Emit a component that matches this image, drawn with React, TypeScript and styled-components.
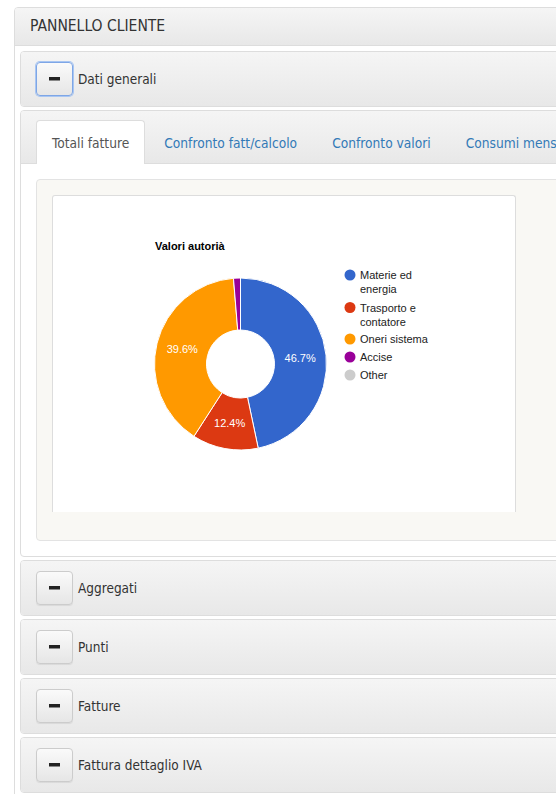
import React from 'react';
import styled, { createGlobalStyle, css } from 'styled-components';

const GlobalStyle = createGlobalStyle`
  html, body {
    margin: 0;
    padding: 0;
    overflow: hidden;
    background: #ffffff;
  }
  body {
    font-family: 'DejaVu Sans Condensed', 'DejaVu Sans', sans-serif;
    color: #333333;
  }
`;

const slices = [
  { label: 'Materie ed energia', value: 46.7, color: '#3366cc' },
  { label: 'Trasporto e contatore', value: 12.4, color: '#dc3912' },
  { label: 'Oneri sistema', value: 39.6, color: '#ff9900' },
  { label: 'Accise', value: 1.3, color: '#990099' },
];

const legend = [
  { lines: ['Materie ed', 'energia'], color: '#3366cc', cy: 79 },
  { lines: ['Trasporto e', 'contatore'], color: '#dc3912', cy: 111.5 },
  { lines: ['Oneri sistema'], color: '#ff9900', cy: 143 },
  { lines: ['Accise'], color: '#990099', cy: 161 },
  { lines: ['Other'], color: '#cccccc', cy: 179 },
];

const tabs = [
  'Totali fatture',
  'Confronto fatt/calcolo',
  'Confronto valori',
  'Consumi mensili',
];

const sections = ['Aggregati', 'Punti', 'Fatture', 'Fattura dettaglio IVA'];

const CX = 187.5;
const CY = 168;
const R = 86;
const HOLE = 34;

const point = (angle: number, r: number) => {
  const rad = ((angle - 90) * Math.PI) / 180;
  return [CX + r * Math.cos(rad), CY + r * Math.sin(rad)];
};

const slicePath = (start: number, end: number) => {
  const [x1, y1] = point(start, R);
  const [x2, y2] = point(end, R);
  const [x3, y3] = point(end, HOLE);
  const [x4, y4] = point(start, HOLE);
  const large = end - start > 180 ? 1 : 0;
  return `M${x1} ${y1} A${R} ${R} 0 ${large} 1 ${x2} ${y2} L${x3} ${y3} A${HOLE} ${HOLE} 0 ${large} 0 ${x4} ${y4} Z`;
};

function DonutChart() {
  let acc = 0;
  return (
    <svg width="462" height="316" viewBox="0 0 462 316">
      <text
        x="102"
        y="54"
        fontFamily="'Liberation Sans', Arial, sans-serif"
        fontSize="11"
        fontWeight="bold"
        fill="#000000"
      >
        Valori autorià
      </text>
      {slices.map((s) => {
        const start = (acc / 100) * 360;
        acc += s.value;
        const end = (acc / 100) * 360;
        const mid = (start + end) / 2;
        const [lx, ly] = point(mid, 60);
        return (
          <g key={s.label}>
            <path d={slicePath(start, end)} fill={s.color} stroke="#ffffff" strokeWidth="1" />
            {s.value > 5 && (
              <text
                x={lx}
                y={ly + 4}
                textAnchor="middle"
                fontFamily="'Liberation Sans', Arial, sans-serif"
                fontSize="11"
                fill="#ffffff"
              >
                {s.value.toFixed(1)}%
              </text>
            )}
          </g>
        );
      })}
      {legend.map((item) => (
        <g key={item.lines[0]}>
          <circle cx="297" cy={item.cy} r="5.5" fill={item.color} />
          {item.lines.map((line, i) => (
            <text
              key={line}
              x="307"
              y={item.cy + 4 + i * 14}
              fontFamily="'Liberation Sans', Arial, sans-serif"
              fontSize="11"
              fill="#222222"
            >
              {line}
            </text>
          ))}
        </g>
      ))}
    </svg>
  );
}

function MinusIcon() {
  return (
    <svg width="11" height="4" viewBox="0 0 11 4">
      <rect x="0" y="0" width="11" height="3.5" fill="#222222" />
    </svg>
  );
}

function SectionHeading({ title, focused }: { title: string; focused?: boolean }) {
  return (
    <PanelHeading>
      <ToggleButton $focused={focused}>
        <MinusIcon />
      </ToggleButton>
      <HeadingTitle>{title}</HeadingTitle>
    </PanelHeading>
  );
}

export default function App() {
  return (
    <>
      <GlobalStyle />
      <Page>
        <OuterPanel>
          <OuterHeading>PANNELLO CLIENTE</OuterHeading>
          <OuterBody>
            <Panel>
              <SectionHeading title="Dati generali" focused />
            </Panel>
            <TabPanel>
              <TabBar>
                {tabs.map((t, i) => (
                  <Tab key={t} $active={i === 0}>
                    {t}
                  </Tab>
                ))}
              </TabBar>
              <TabContent>
                <Well>
                  <ChartBox>
                    <DonutChart />
                  </ChartBox>
                </Well>
              </TabContent>
            </TabPanel>
            {sections.map((s) => (
              <Panel key={s}>
                <SectionHeading title={s} />
              </Panel>
            ))}
          </OuterBody>
        </OuterPanel>
      </Page>
    </>
  );
}

const Page = styled.div`
  padding: 7px 0 0 14px;
  width: 700px;
`;

const OuterPanel = styled.div`
  border: 1px solid #dddddd;
  border-radius: 4px;
  background: #ffffff;
`;

const OuterHeading = styled.div`
  padding: 10px 15px;
  font-size: 15.5px;
  line-height: 17px;
  color: #333333;
  background: linear-gradient(to bottom, #f5f5f5 0%, #e8e8e8 100%);
  border-bottom: 1px solid #dddddd;
  border-radius: 3px 3px 0 0;
`;

const OuterBody = styled.div`
  padding: 5px;
  display: flex;
  flex-direction: column;
  gap: 3px;
`;

const Panel = styled.div`
  border: 1px solid #dddddd;
  border-radius: 4px;
  background: #ffffff;
  overflow: hidden;
`;

const PanelHeading = styled.div`
  display: flex;
  align-items: center;
  padding: 10px 15px;
  height: 34px;
  background: linear-gradient(to bottom, #f5f5f5 0%, #e8e8e8 100%);
`;

const ToggleButton = styled.button<{ $focused?: boolean }>`
  display: flex;
  align-items: center;
  justify-content: center;
  width: 37px;
  height: 34px;
  padding: 0;
  border: 1px solid #cccccc;
  border-radius: 4px;
  background: linear-gradient(to bottom, #fafafa 0%, #e6e6e6 100%);
  box-shadow: inset 0 1px 0 rgba(255, 255, 255, 0.15), 0 1px 1px rgba(0, 0, 0, 0.075);
  cursor: pointer;
  ${({ $focused }) =>
    $focused &&
    css`
      border-color: #7ea6e6;
      box-shadow: 0 0 0 1px #a9c6f2;
    `}
`;

const HeadingTitle = styled.span`
  margin-left: 5px;
  font-size: 13.5px;
  color: #333333;
`;

const TabPanel = styled(Panel)``;

const TabBar = styled.div`
  display: flex;
  align-items: flex-end;
  gap: 2px;
  height: 53px;
  padding: 0 15px;
  box-sizing: border-box;
  background: linear-gradient(to bottom, #f5f5f5 0%, #e8e8e8 100%);
  border-bottom: 1px solid #dddddd;
`;

const Tab = styled.div<{ $active?: boolean }>`
  flex-shrink: 0;
  height: 42px;
  margin-bottom: -1px;
  padding: 0 15px 0 16px;
  display: flex;
  align-items: center;
  font-size: 13.65px;
  white-space: nowrap;
  border: 1px solid transparent;
  border-bottom: none;
  border-radius: 4px 4px 0 0;
  color: #337ab7;
  ${({ $active }) =>
    $active &&
    css`
      background: #ffffff;
      border-color: #dddddd;
      color: #555555;
      height: 43px;
      padding: 0 15px;
    `}
`;

const TabContent = styled.div`
  padding: 15px;
`;

const Well = styled.div`
  padding: 15px 15px 28px;
  background: #f9f8f4;
  border: 1px solid #e3e3e3;
  border-radius: 4px;
`;

const ChartBox = styled.div`
  width: 462px;
  height: 316px;
  background: #ffffff;
  border: 1px solid #dddddd;
  border-bottom: none;
  border-radius: 3px 3px 0 0;
  overflow: hidden;
`;
